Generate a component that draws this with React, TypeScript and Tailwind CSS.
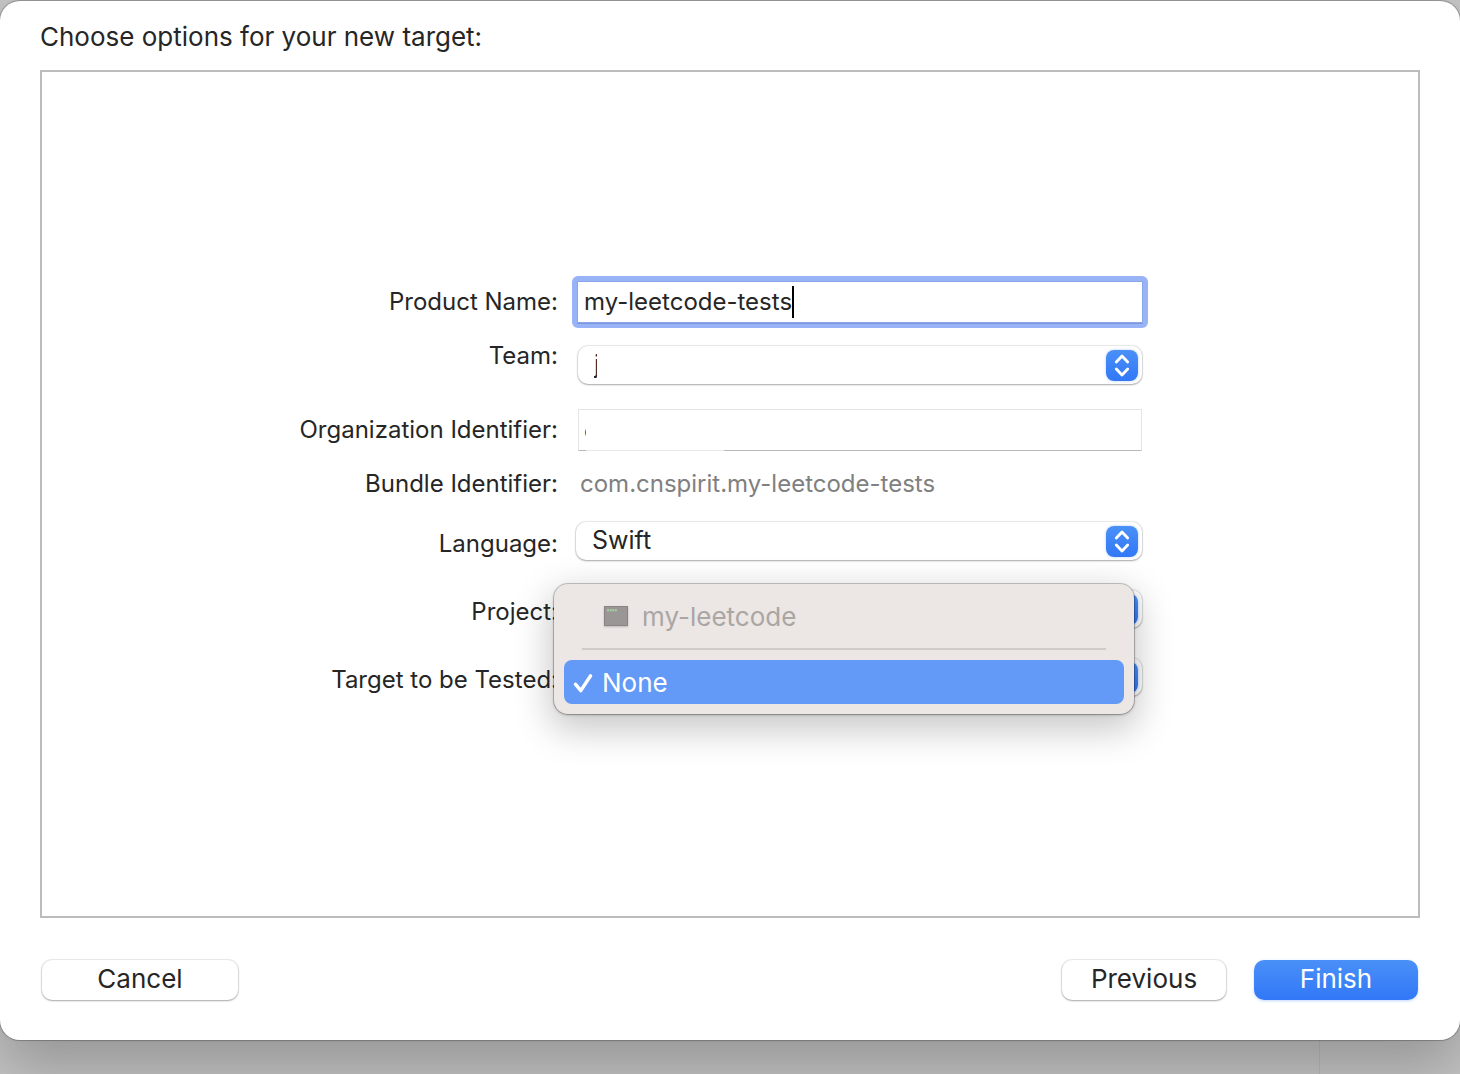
import type { ReactNode } from "react";

function Stepper() {
  return (
    <span className="pointer-events-none absolute right-1 top-1 flex h-[31px] w-8 items-center justify-center rounded-lg bg-linear-to-b from-[#4a90f8] to-[#3277f6] shadow-[0_0_3px_rgba(50,119,246,0.35)]">
      <svg width="32" height="31" viewBox="0 0 32 31" fill="none" stroke="white" strokeWidth="2.8" strokeLinecap="round" strokeLinejoin="round" aria-hidden="true">
        <path d="M10.3 12 16 6l5.7 6" />
        <path d="M10.3 19 16 25l5.7-6" />
      </svg>
    </span>
  );
}

function PopUp({ id, value }: { id: string; value: string }) {
  return (
    <>
      <select
        id={id}
        defaultValue={value}
        className="block h-[38px] w-full appearance-none rounded-[10px] bg-white pb-0.5 pl-4 pr-12 text-[25px] leading-9 text-[#262626] shadow-[0_0_1px_1px_rgba(0,0,0,0.09),0_1px_2px_rgba(0,0,0,0.28)] outline-none"
      >
        <option>{value}</option>
      </select>
      <Stepper />
    </>
  );
}

function Row({ id, label, row, pad, children }: { id: string; label: string; row: string; pad: string; children: ReactNode }) {
  return (
    <div className={`grid grid-cols-[minmax(0,516fr)_minmax(0,584fr)_minmax(0,276fr)] items-start ${row}`}>
      <label htmlFor={id} className={`whitespace-nowrap text-right leading-8 ${pad}`}>
        {label}
      </label>
      <div className="pl-5">{children}</div>
    </div>
  );
}

function TargetMenu() {
  return (
    <ul
      role="listbox"
      aria-label="Target to be Tested"
      className="absolute -left-6 right-2 -top-[74px] z-10 rounded-[14px] bg-[#ece6e4] p-[10px] text-[26px] shadow-[0_0_0_1px_rgba(0,0,0,0.2),0_12px_36px_4px_rgba(0,0,0,0.22),0_1px_3px_rgba(0,0,0,0.25)]"
    >
      <li role="option" aria-selected="false" aria-disabled="true" className="flex h-11 items-center gap-[14px] pl-10 text-[#aaa6a4]">
        <svg width="24" height="20" viewBox="0 0 24 20" className="shadow-[0_1px_2px_rgba(0,0,0,0.2)]" aria-hidden="true">
          <rect width="24" height="20" fill="#898584" />
          <rect x="1" y="1" width="22" height="18" fill="#9a9695" />
          <path d="M3 4.2h10" stroke="#a6d0a3" strokeWidth="2" strokeDasharray="2 .6" />
        </svg>
        my-leetcode
      </li>
      <li role="separator" className="mx-[18px] my-[10px] h-0.5 bg-[#d0cbc9]" />
      <li role="option" aria-selected="true" className="flex h-11 items-center gap-2 rounded-lg bg-[#6399f7] pl-2 text-white">
        <svg width="22" height="24" viewBox="0 0 22 24" fill="none" stroke="white" strokeWidth="3.4" strokeLinecap="round" strokeLinejoin="round" aria-hidden="true">
          <path d="M3.4 14.2 8.8 20.6 18.6 5.8" />
        </svg>
        None
      </li>
    </ul>
  );
}

const plainButton =
  "h-10 rounded-[10px] bg-white pb-0.5 text-[26px] leading-9 shadow-[0_0_1px_1px_rgba(0,0,0,0.09),0_1px_2px_rgba(0,0,0,0.28)]";

export default function App() {
  return (
    <div className="flex min-h-screen flex-col overflow-hidden bg-[#c4c4c4] pt-px font-['Inter',sans-serif] text-[#262626]">
      <main className="relative z-10 flex flex-1 flex-col rounded-[20px] bg-white px-10 pb-10 pt-[18px] shadow-[0_0_1px_1px_rgba(0,0,0,0.25),0_28px_60px_rgba(0,0,0,0.24)]">
        <h1 className="text-[26px] leading-9">Choose options for your new target:</h1>
        <form className="mt-[15px] flex flex-1 flex-col justify-center border-2 border-[#bcbcbc] pb-[10px] text-[24px]">
          <Row id="product" label="Product Name:" row="h-16" pad="pt-[5px]">
            <div className="relative mt-px">
              <span className="pointer-events-none absolute -inset-[6px] rounded-md bg-[#98b4f6]" />
              <input
                id="product"
                type="text"
                defaultValue="my-leetcode-tests"
                className="relative block h-10 w-full bg-white px-[6px] pb-0.5 shadow-[0_0_0_1px_#88a5ea,0_1px_0_1px_#7c98df] outline-none"
              />
              <span className="absolute left-[214px] top-1 h-8 w-0.5 bg-black" />
            </div>
          </Row>
          <Row id="team" label="Team:" row="h-16" pad="-mt-[5px]">
            <div className="relative mt-px">
              <PopUp id="team" value="j" />
              <span className="absolute left-[19px] top-1 h-[30px] w-4 bg-white" />
            </div>
          </Row>
          <Row id="organization" label="Organization Identifier:" row="h-[59px]" pad="pt-[5px]">
            <div className="relative">
              <input
                id="organization"
                type="text"
                defaultValue="c"
                className="block h-[42px] w-full border border-[#e4e4e4] border-b-[#b8b8b8] bg-white px-[5px] outline-none"
              />
              <span className="absolute left-2 top-px h-[41px] w-[138px] border-b border-[#e8e8e8] bg-white" />
            </div>
          </Row>
          <Row id="bundle" label="Bundle Identifier:" row="h-[53px]" pad="">
            <output id="bundle" className="block pl-0.5 leading-8 text-[#808080]">
              com.cnspirit.my-leetcode-tests
            </output>
          </Row>
          <Row id="language" label="Language:" row="h-[68px]" pad="pt-[7px]">
            <div className="relative -ml-0.5 mt-px">
              <PopUp id="language" value="Swift" />
            </div>
          </Row>
          <Row id="project" label="Project:" row="h-[68px]" pad="pt-[7px]">
            <div className="relative mt-px">
              <PopUp id="project" value="" />
            </div>
          </Row>
          <Row id="target" label="Target to be Tested:" row="h-10" pad="pt-[7px]">
            <div className="relative mt-px">
              <PopUp id="target" value="" />
              <TargetMenu />
            </div>
          </Row>
        </form>
        <footer className="mt-[42px] flex items-center px-0.5">
          <button type="button" className={`w-[196px] ${plainButton}`}>
            Cancel
          </button>
          <button type="button" className={`ml-auto w-[164px] ${plainButton}`}>
            Previous
          </button>
          <button
            type="submit"
            className="ml-7 h-10 w-[164px] rounded-[10px] bg-linear-to-b from-[#4a90f8] to-[#3277f6] pb-0.5 text-[26px] leading-9 text-white shadow-[0_1px_3px_rgba(50,119,246,0.3)]"
          >
            Finish
          </button>
        </footer>
      </main>
      <div className="flex h-[34px] justify-end">
        <div className="w-[141px] border-l border-[#b8b8b8]" />
      </div>
    </div>
  );
}
